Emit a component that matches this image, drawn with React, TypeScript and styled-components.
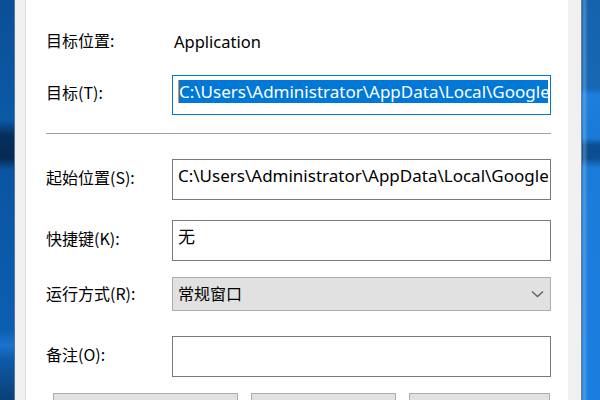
import React from "react";
import styled, { createGlobalStyle } from "styled-components";

const Global = createGlobalStyle`
  html, body { margin: 0; padding: 0; width: 600px; height: 400px; overflow: hidden; }
  body { font-family: "Noto Sans", "Noto Sans CJK SC", sans-serif; }
`;

const Screen = styled.div`
  display: flex;
  width: 600px;
  height: 400px;
  overflow: hidden;
`;

const DesktopLeft = styled.div`
  width: 14px;
  flex: none;
  background: linear-gradient(
    to bottom,
    #0b4f96 0px,
    #0a5aa6 120px,
    #072f5c 135px,
    #062a52 158px,
    #0a55a2 170px,
    #0b5fb2 330px,
    #1a74cc 345px,
    #0d5aa8 360px,
    #0a3f78 400px
  );
  border-right: 1px solid #5a7493;
`;

const DesktopRight = styled.div`
  flex: 1;
  background: linear-gradient(
      to right,
      rgba(255, 255, 255, 0) 0px,
      rgba(170, 215, 245, 0.35) 2px,
      rgba(255, 255, 255, 0) 6px
    ),
    linear-gradient(
      to bottom,
      #1563ad 0px,
      #1767b4 88px,
      #1d7fdc 95px,
      #1a7ad6 138px,
      #0b4f92 145px,
      #0c4e8f 158px,
      #1b7bd8 168px,
      #1a7ee0 400px
    );
  border-left: 1px solid #6b7f95;
`;

const SideGutter = styled.div<{ $w: number }>`
  width: ${(p) => p.$w}px;
  flex: none;
  background: #f0f0f0;
`;

const Page = styled.div`
  width: 543px;
  flex: none;
  background: #ffffff;
  border-left: 1px solid #dcdcdc;
  display: flex;
  flex-direction: column;
  padding: 0 18px 0 20px;
  box-sizing: border-box;
`;

const Row = styled.div<{ $top: number; $h: number }>`
  display: grid;
  grid-template-columns: 126px 379px;
  align-items: center;
  margin-top: ${(p) => p.$top}px;
  height: ${(p) => p.$h}px;
  flex: none;
`;

const Label = styled.div<{ $lift?: number }>`
  font-family: "Noto Sans CJK SC", "Noto Sans", sans-serif;
  font-size: 16px;
  line-height: 20px;
  color: #000;
  white-space: nowrap;
  margin-bottom: ${(p) => (p.$lift ?? 6)}px;
`;

const Value = styled.div`
  font-family: "Noto Sans", "Noto Sans CJK SC", sans-serif;
  font-size: 16.5px;
  color: #000;
  padding-left: 2px;
`;

const TextBox = styled.div<{ $focused?: boolean }>`
  box-sizing: border-box;
  height: 100%;
  border: 1px solid ${(p) => (p.$focused ? "#0078d7" : "#7a7a7a")};
  background: #fff;
  padding: 4px 2px 0 5px;
  overflow: hidden;
  white-space: nowrap;
  font-family: "Noto Sans", "Noto Sans CJK SC", sans-serif;
  font-size: 17px;
  line-height: 23px;
  color: #000;
`;

const Clip = styled.div`
  overflow: hidden;
  white-space: nowrap;
`;

const Selected = styled.span`
  display: inline-block;
  background: #0078d7;
  color: #fff;
  border-left: 1px solid #f08a3c;
  padding-right: 3px;
`;

const Separator = styled.div`
  height: 1px;
  background: #a0a0a0;
  margin-top: 18px;
  width: 505px;
  flex: none;
`;

const Combo = styled.div`
  box-sizing: border-box;
  height: 100%;
  border: 1px solid #adadad;
  background: #e1e1e1;
  display: flex;
  align-items: center;
  justify-content: space-between;
  padding: 0 6px 0 5px;
  font-family: "Noto Sans CJK SC", "Noto Sans", sans-serif;
  font-size: 16px;
  color: #000;
`;

const ComboText = styled.span`
  margin-bottom: 3px;
`;

const ButtonBar = styled.div`
  display: flex;
  margin-top: 16px;
  padding-left: 7px;
  gap: 13px;
  flex: none;
`;

const Button = styled.div<{ $w: number }>`
  box-sizing: border-box;
  width: ${(p) => p.$w}px;
  height: 32px;
  border: 1px solid #adadad;
  background: #e1e1e1;
  display: flex;
  align-items: center;
  justify-content: center;
  font-family: "Noto Sans CJK SC", sans-serif;
  font-size: 15px;
`;

const Chevron = () => (
  <svg width="13" height="8" viewBox="0 0 13 8">
    <path d="M1 1.5 L6.5 6.5 L12 1.5" fill="none" stroke="#606060" strokeWidth="1.4" />
  </svg>
);

export default function App() {
  return (
    <Screen>
      <Global />
      <DesktopLeft />
      <SideGutter $w={10} />
      <Page>
        <Row $top={26} $h={30}>
          <Label $lift={2}>目标位置:</Label>
          <Value>Application</Value>
        </Row>
        <Row $top={19} $h={40}>
          <Label>目标(T):</Label>
          <TextBox $focused>
            <Clip>
              <Selected>C:\Users\Administrator\AppData\Local\Google\Chrome\Application\chrome.exe</Selected>
            </Clip>
          </TextBox>
        </Row>
        <Separator />
        <Row $top={25} $h={41}>
          <Label>起始位置(S):</Label>
          <TextBox>
            <Clip>C:\Users\Administrator\AppData\Local\Google\Chrome\Application</Clip>
          </TextBox>
        </Row>
        <Row $top={20} $h={41}>
          <Label>快捷键(K):</Label>
          <TextBox>无</TextBox>
        </Row>
        <Row $top={16} $h={34}>
          <Label $lift={2}>运行方式(R):</Label>
          <Combo>
            <ComboText>常规窗口</ComboText>
            <Chevron />
          </Combo>
        </Row>
        <Row $top={25} $h={41}>
          <Label>备注(O):</Label>
          <TextBox />
        </Row>
        <ButtonBar>
          <Button $w={187}>打开文件所在的位置(F)</Button>
          <Button $w={146}>更改图标(C)...</Button>
          <Button $w={143}>高级(D)...</Button>
        </ButtonBar>
      </Page>
      <SideGutter $w={13} />
      <DesktopRight />
    </Screen>
  );
}
